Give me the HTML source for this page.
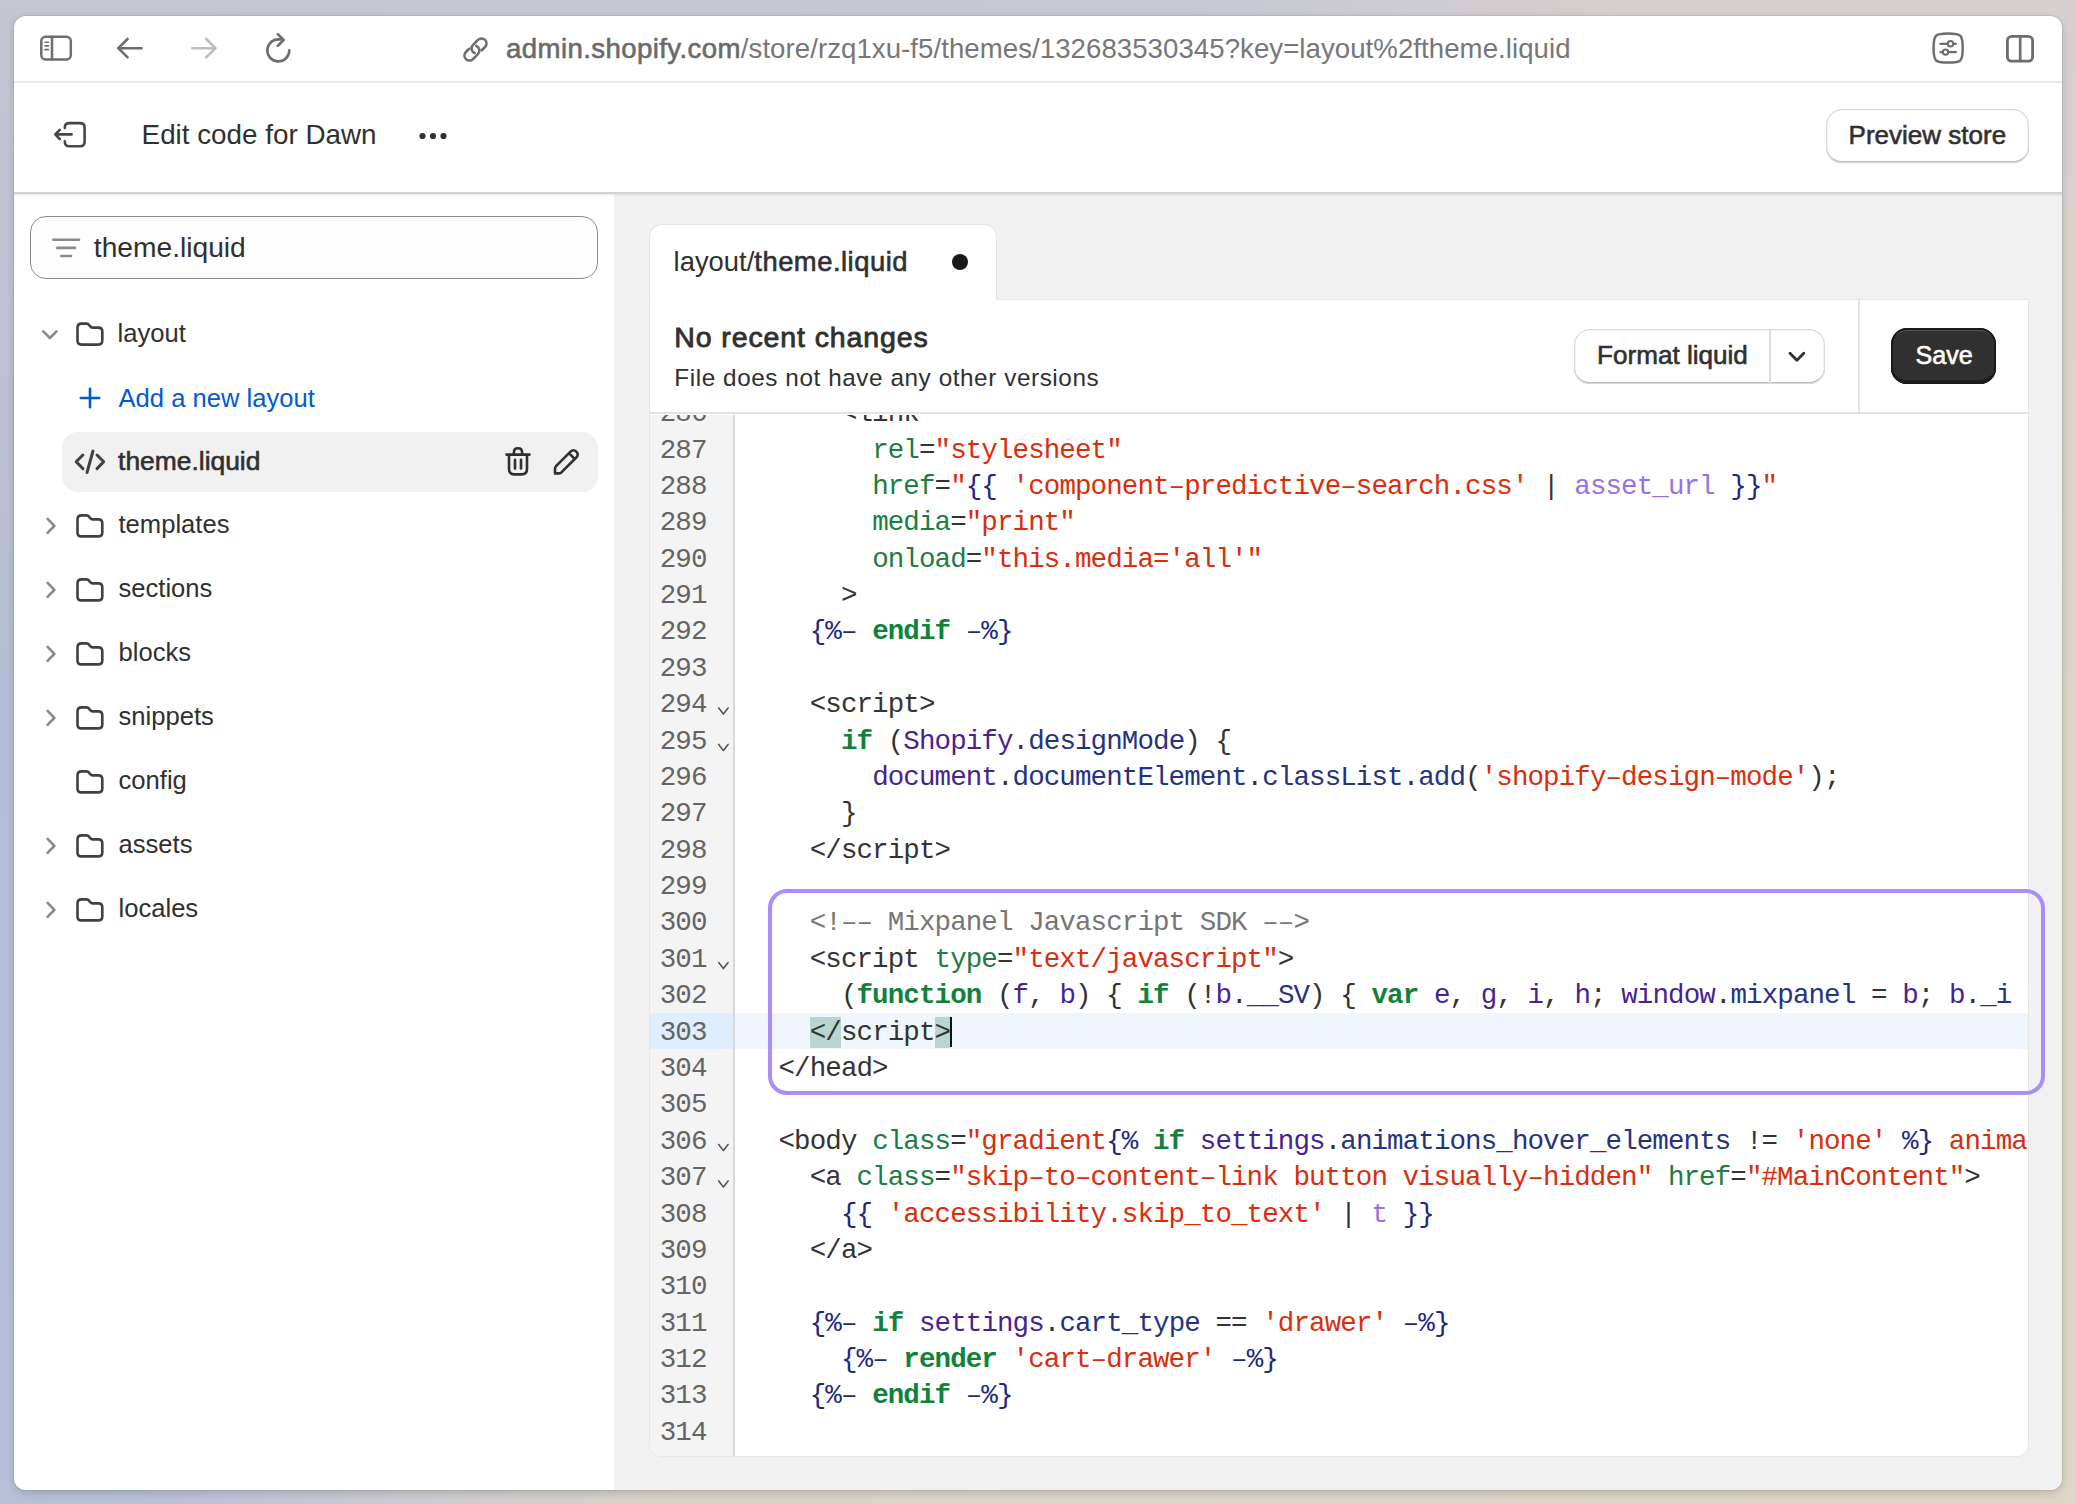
<!DOCTYPE html>
<html><head><meta charset="utf-8"><title>Edit code</title>
<style>
*{box-sizing:border-box;margin:0;padding:0}
html,body{width:2076px;height:1504px;overflow:hidden}
body{position:relative;font-family:"Liberation Sans",sans-serif;color:#303030;
 background:linear-gradient(180deg,rgba(208,206,206,.55) 0%,rgba(208,206,206,0) 45%),linear-gradient(125deg,#b5bdd6 0%,#b9c0d8 38%,#cdcbd0 47%,#dad3c9 55%,#dfd6c7 100%)}
.abs{position:absolute}
.win{position:absolute;left:14px;top:16px;width:2048px;height:1474px;border-radius:12px;background:#fff;overflow:hidden;
 box-shadow:0 0 0 1px rgba(0,0,0,.06),0 3px 8px rgba(0,0,0,.16)}
.inner{position:absolute;left:-14px;top:-16px;width:2076px;height:1504px}
.t{position:absolute;white-space:nowrap;line-height:1}
svg{position:absolute;overflow:visible}
.ln{position:absolute;left:0;width:57px;text-align:right;height:36.38px;line-height:36.38px;padding-top:1.5px;font-family:"Liberation Mono",monospace;font-size:27.5px;letter-spacing:-0.9px;color:#646464}
.cl{position:absolute;left:129px;height:36.38px;line-height:36.38px;padding-top:1.5px;white-space:pre;font-family:"Liberation Mono",monospace;font-size:27.5px;letter-spacing:-0.9px;color:#333}
.pn{color:#333}.at{color:#1b7d3f}.st{color:#d92e0c}.lq{color:#1f287e}.kw{color:#118239;font-weight:700}
.vr{color:#4a1f92}.pr{color:#25337f}.fl{color:#9a72e0}.cm{color:#767676}
.mb{background:#b8d5cf}
</style></head><body>
<div class="win"><div class="inner">
<div class="abs" style="left:0;top:81px;width:2076px;height:1.6px;background:#e9e9e9"></div>
<svg width="2076" height="1504" style="left:0;top:0" fill="none" stroke-linecap="round" stroke-linejoin="round">
<!-- sidebar icon -->
<rect x="41.3" y="36.8" width="29.5" height="22.6" rx="4.2" stroke="#6d6d6d" stroke-width="2.5"/>
<line x1="52" y1="37" x2="52" y2="59" stroke="#6d6d6d" stroke-width="2.5"/>
<line x1="45" y1="42.2" x2="48.5" y2="42.2" stroke="#6d6d6d" stroke-width="1.6"/>
<line x1="45" y1="45.9" x2="48.5" y2="45.9" stroke="#6d6d6d" stroke-width="1.6"/>
<line x1="45" y1="49.6" x2="48.5" y2="49.6" stroke="#6d6d6d" stroke-width="1.6"/>
<!-- back -->
<path d="M141.5 48.2 H118.3 M127.6 39 L118.3 48.2 L127.6 57.4" stroke="#6d6d6d" stroke-width="2.6"/>
<!-- forward -->
<path d="M192.3 48.2 H215.5 M206.2 39 L215.5 48.2 L206.2 57.4" stroke="#bdbdbd" stroke-width="2.6"/>
<!-- reload -->
<path d="M289.3 50.4 A11 11 0 1 1 280.5 39.6" stroke="#6d6d6d" stroke-width="2.6"/>
<path d="M277.8 34.2 L283.6 40 L277.8 45.8" stroke="#6d6d6d" stroke-width="2.6"/>
<!-- link -->
<g transform="translate(475.5 49.5) rotate(-45)" stroke="#6d6d6d" stroke-width="2.6">
<path d="M4 5 L8.5 5 A5 5 0 0 0 8.5 -5 L1.5 -5 A5 5 0 0 0 -3.1 1.95"/>
<path d="M-4 -5 L-8.5 -5 A5 5 0 0 0 -8.5 5 L-1.5 5 A5 5 0 0 0 3.1 -1.95"/>
</g>
<!-- sliders -->
<path d="M1948.2 33.5 C1935 33.5 1933.6 34.9 1933.6 48.1 C1933.6 61.3 1935 62.6 1948.2 62.6 C1961.4 62.6 1962.7 61.3 1962.7 48.1 C1962.7 34.9 1961.4 33.5 1948.2 33.5 Z" stroke="#6d6d6d" stroke-width="2.5"/>
<line x1="1940.4" y1="43.8" x2="1947.8" y2="43.8" stroke="#6d6d6d" stroke-width="2.2"/>
<line x1="1953.2" y1="43.8" x2="1955.9" y2="43.8" stroke="#6d6d6d" stroke-width="2.2"/>
<circle cx="1950.5" cy="43.8" r="2.7" stroke="#6d6d6d" stroke-width="2"/>
<line x1="1940.4" y1="52.1" x2="1942.8" y2="52.1" stroke="#6d6d6d" stroke-width="2.2"/>
<line x1="1948.2" y1="52.1" x2="1955.9" y2="52.1" stroke="#6d6d6d" stroke-width="2.2"/>
<circle cx="1945.5" cy="52.1" r="2.7" stroke="#6d6d6d" stroke-width="2"/>
<!-- split -->
<rect x="2007.4" y="36.4" width="25.2" height="24.8" rx="4.2" stroke="#6d6d6d" stroke-width="2.8"/>
<line x1="2020.2" y1="36.5" x2="2020.2" y2="61" stroke="#6d6d6d" stroke-width="2.6"/>
<!-- exit -->
<path d="M64.8 128 V127.6 Q64.8 123.1 69.3 123.1 H80.1 Q84.6 123.1 84.6 127.6 V141.7 Q84.6 146.2 80.1 146.2 H69.3 Q64.8 146.2 64.8 141.7 V141.4" stroke="#474747" stroke-width="2.6"/>
<path d="M71.6 134.4 H55.5 M59.8 129.8 L55.2 134.4 L59.8 139" stroke="#474747" stroke-width="2.6"/>
<!-- dots -->
<circle cx="422.5" cy="136" r="3.1" fill="#303030" stroke="none"/>
<circle cx="433" cy="136" r="3.1" fill="#303030" stroke="none"/>
<circle cx="443.5" cy="136" r="3.1" fill="#303030" stroke="none"/>
</svg>
<div class="t" style="left:506.00px;top:34.53px;font-size:27.6px;color:#777777;font-weight:400;letter-spacing:0.06px;font-family:'Liberation Sans',sans-serif;"><span style="-webkit-text-stroke:0.6px #6a6a6a;color:#6a6a6a;letter-spacing:0.4px">admin.shopify.com</span>/store/rzq1xu-f5/themes/132683530345?key=layout%2ftheme.liquid</div>
<div class="t" style="left:141.60px;top:121.36px;font-size:27.8px;color:#303030;font-weight:400;letter-spacing:0px;font-family:'Liberation Sans',sans-serif;">Edit code for Dawn</div>
<div class="abs" style="left:1825.5px;top:108.5px;width:203px;height:54.5px;border-radius:16px;background:#fff;box-shadow:inset 0 0 0 1.3px #d9d9d9, inset 0 -2px 0 #b5b5b5, 0 1px 0 rgba(0,0,0,.06)"></div>
<div class="t" style="left:1848.60px;top:121.99px;font-size:26px;color:#303030;font-weight:400;letter-spacing:0px;font-family:'Liberation Sans',sans-serif;-webkit-text-stroke:0.6px #303030;">Preview store</div>
<div class="abs" style="left:0;top:193px;width:614px;height:1320px;background:#fff"></div>
<div class="abs" style="left:30.3px;top:216.2px;width:567.6px;height:63.3px;border-radius:16px;background:#fdfdfd;border:1.4px solid #8c8c8c"></div>
<svg width="2076" height="1504" style="left:0;top:0" fill="none" stroke-linecap="round">
<line x1="53.3" y1="239.7" x2="79" y2="239.7" stroke="#8a8a8a" stroke-width="2.6"/>
<line x1="57.3" y1="247.9" x2="75" y2="247.9" stroke="#8a8a8a" stroke-width="2.6"/>
<line x1="61.3" y1="256" x2="71" y2="256" stroke="#8a8a8a" stroke-width="2.6"/>
</svg>
<div class="t" style="left:93.80px;top:233.12px;font-size:28.2px;color:#303030;font-weight:400;letter-spacing:0px;font-family:'Liberation Sans',sans-serif;">theme.liquid</div>
<div class="abs" style="left:62px;top:432px;width:535.7px;height:60px;border-radius:16px;background:#f1f1f1"></div>
<svg width="2076" height="1504" style="left:0;top:0" fill="none" stroke-linecap="round" stroke-linejoin="round">
<path d="M43.3 331.4 L49.9 338 L56.5 331.4" stroke="#8a8a8a" stroke-width="2.6"/>
<path d="M77.5 327.59999999999997 Q77.5 323.59999999999997 81.5 323.59999999999997 H86.6 Q88.1 323.59999999999997 89 324.9 L90.2 326.29999999999995 Q91.1 327.59999999999997 92.6 327.59999999999997 H98.3 Q102.3 327.59999999999997 102.3 331.59999999999997 V340.59999999999997 Q102.3 344.59999999999997 98.3 344.59999999999997 H81.5 Q77.5 344.59999999999997 77.5 340.59999999999997 Z" stroke="#404040" stroke-width="2.6"/>
<path d="M90 388.8 V407.3 M80.8 398 H99.2" stroke="#005bd3" stroke-width="2.6"/>
<path d="M82.9 455 L76.2 461.8 L82.9 468.6 M97 455 L103.7 461.8 L97 468.6 M93 451 L87 472.5" stroke="#404040" stroke-width="3"/>
<path d="M506.5 454.6 H529.5 M513.9 453.7 V452.4 Q513.9 448.3 518 448.3 Q522.1 448.3 522.1 452.4 V453.7 M509 455 V469 Q509 474.4 514.4 474.4 H521.6 Q527 474.4 527 469 V455 M515 459.7 V468.5 M521 459.7 V468.5" stroke="#303030" stroke-width="2.6"/>
<path d="M555 473.4 V469 Q555 467.2 556.3 465.9 L570.5 451.7 Q573.4 448.8 576.3 451.7 Q579.2 454.6 576.3 457.5 L562.1 471.7 Q560.8 473.4 559 473.4 Z M569.2 453.4 L574.6 458.8" stroke="#303030" stroke-width="2.6"/>
<path d="M47.6 518.9 L54.4 525.9 L47.6 532.9" stroke="#8a8a8a" stroke-width="2.6"/>
<path d="M77.5 519.4 Q77.5 515.4 81.5 515.4 H86.6 Q88.1 515.4 89 516.6999999999999 L90.2 518.1 Q91.1 519.4 92.6 519.4 H98.3 Q102.3 519.4 102.3 523.4 V532.4 Q102.3 536.4 98.3 536.4 H81.5 Q77.5 536.4 77.5 532.4 Z" stroke="#404040" stroke-width="2.6"/>
<path d="M47.6 582.9 L54.4 589.9 L47.6 596.9" stroke="#8a8a8a" stroke-width="2.6"/>
<path d="M77.5 583.4 Q77.5 579.4 81.5 579.4 H86.6 Q88.1 579.4 89 580.6999999999999 L90.2 582.1 Q91.1 583.4 92.6 583.4 H98.3 Q102.3 583.4 102.3 587.4 V596.4 Q102.3 600.4 98.3 600.4 H81.5 Q77.5 600.4 77.5 596.4 Z" stroke="#404040" stroke-width="2.6"/>
<path d="M47.6 646.9 L54.4 653.9 L47.6 660.9" stroke="#8a8a8a" stroke-width="2.6"/>
<path d="M77.5 647.4 Q77.5 643.4 81.5 643.4 H86.6 Q88.1 643.4 89 644.6999999999999 L90.2 646.1 Q91.1 647.4 92.6 647.4 H98.3 Q102.3 647.4 102.3 651.4 V660.4 Q102.3 664.4 98.3 664.4 H81.5 Q77.5 664.4 77.5 660.4 Z" stroke="#404040" stroke-width="2.6"/>
<path d="M47.6 710.9 L54.4 717.9 L47.6 724.9" stroke="#8a8a8a" stroke-width="2.6"/>
<path d="M77.5 711.4 Q77.5 707.4 81.5 707.4 H86.6 Q88.1 707.4 89 708.6999999999999 L90.2 710.1 Q91.1 711.4 92.6 711.4 H98.3 Q102.3 711.4 102.3 715.4 V724.4 Q102.3 728.4 98.3 728.4 H81.5 Q77.5 728.4 77.5 724.4 Z" stroke="#404040" stroke-width="2.6"/>
<path d="M77.5 775.4 Q77.5 771.4 81.5 771.4 H86.6 Q88.1 771.4 89 772.6999999999999 L90.2 774.1 Q91.1 775.4 92.6 775.4 H98.3 Q102.3 775.4 102.3 779.4 V788.4 Q102.3 792.4 98.3 792.4 H81.5 Q77.5 792.4 77.5 788.4 Z" stroke="#404040" stroke-width="2.6"/>
<path d="M47.6 838.9 L54.4 845.9 L47.6 852.9" stroke="#8a8a8a" stroke-width="2.6"/>
<path d="M77.5 839.4 Q77.5 835.4 81.5 835.4 H86.6 Q88.1 835.4 89 836.6999999999999 L90.2 838.1 Q91.1 839.4 92.6 839.4 H98.3 Q102.3 839.4 102.3 843.4 V852.4 Q102.3 856.4 98.3 856.4 H81.5 Q77.5 856.4 77.5 852.4 Z" stroke="#404040" stroke-width="2.6"/>
<path d="M47.6 902.9 L54.4 909.9 L47.6 916.9" stroke="#8a8a8a" stroke-width="2.6"/>
<path d="M77.5 903.4 Q77.5 899.4 81.5 899.4 H86.6 Q88.1 899.4 89 900.6999999999999 L90.2 902.1 Q91.1 903.4 92.6 903.4 H98.3 Q102.3 903.4 102.3 907.4 V916.4 Q102.3 920.4 98.3 920.4 H81.5 Q77.5 920.4 77.5 916.4 Z" stroke="#404040" stroke-width="2.6"/>
</svg>
<div class="t" style="left:117.50px;top:320.52px;font-size:25.6px;color:#303030;font-weight:400;letter-spacing:0px;font-family:'Liberation Sans',sans-serif;">layout</div>
<div class="t" style="left:118.50px;top:385.62px;font-size:25.6px;color:#005bd3;font-weight:400;letter-spacing:0px;font-family:'Liberation Sans',sans-serif;">Add a new layout</div>
<div class="t" style="left:118.10px;top:447.75px;font-size:26.4px;color:#303030;font-weight:400;letter-spacing:0px;font-family:'Liberation Sans',sans-serif;-webkit-text-stroke:0.6px #303030;">theme.liquid</div>
<div class="t" style="left:118.50px;top:512.32px;font-size:25.6px;color:#303030;font-weight:400;letter-spacing:0px;font-family:'Liberation Sans',sans-serif;">templates</div>
<div class="t" style="left:118.50px;top:576.32px;font-size:25.6px;color:#303030;font-weight:400;letter-spacing:0px;font-family:'Liberation Sans',sans-serif;">sections</div>
<div class="t" style="left:118.50px;top:640.32px;font-size:25.6px;color:#303030;font-weight:400;letter-spacing:0px;font-family:'Liberation Sans',sans-serif;">blocks</div>
<div class="t" style="left:118.50px;top:704.32px;font-size:25.6px;color:#303030;font-weight:400;letter-spacing:0px;font-family:'Liberation Sans',sans-serif;">snippets</div>
<div class="t" style="left:118.50px;top:768.32px;font-size:25.6px;color:#303030;font-weight:400;letter-spacing:0px;font-family:'Liberation Sans',sans-serif;">config</div>
<div class="t" style="left:118.50px;top:832.32px;font-size:25.6px;color:#303030;font-weight:400;letter-spacing:0px;font-family:'Liberation Sans',sans-serif;">assets</div>
<div class="t" style="left:118.50px;top:896.32px;font-size:25.6px;color:#303030;font-weight:400;letter-spacing:0px;font-family:'Liberation Sans',sans-serif;">locales</div>
<div class="abs" style="left:614px;top:193.5px;width:1470px;height:1320px;background:#f1f1f1"></div>
<div class="abs" style="left:0;top:192px;width:2076px;height:1.5px;background:#d3d3d6"></div>
<div class="abs" style="left:0;top:193.5px;width:2076px;height:3.5px;background:linear-gradient(rgba(0,0,0,.07),rgba(0,0,0,0))"></div>
<div class="abs" style="left:649.5px;top:225.2px;width:346.5px;height:80px;border-radius:12px 12px 0 0;background:#fff;box-shadow:0 0 0 1px #e6e6e6"></div>
<div class="t" style="left:673.60px;top:247.90px;font-size:27.4px;color:#303030;font-weight:400;letter-spacing:0px;font-family:'Liberation Sans',sans-serif;">layout/<span style="-webkit-text-stroke:0.6px #303030;letter-spacing:0.5px">theme.liquid</span></div>
<div class="abs" style="left:952px;top:254.2px;width:16px;height:16px;border-radius:50%;background:#1a1a1a"></div>
<div class="abs" style="left:649.5px;top:299.6px;width:1378.5px;height:1156.4px;border-radius:0 0 12px 12px;background:#fff;box-shadow:0 0 0 1px #e6e6e6;overflow:hidden" id="card">
<div class="abs" style="left:0;top:112.6px;width:1378.5px;height:1.5px;background:#e3e3e3"></div>
<div class="abs" style="left:1208.5px;top:0;width:1.5px;height:113px;background:#e3e3e3"></div>
</div>
<div class="abs" style="left:650.5px;top:290px;width:345.5px;height:12px;background:#fff"></div>
<div class="t" style="left:674.20px;top:323.07px;font-size:28.5px;color:#303030;font-weight:400;letter-spacing:0.9px;font-family:'Liberation Sans',sans-serif;-webkit-text-stroke:0.85px #303030;">No recent changes</div>
<div class="t" style="left:674.30px;top:366.33px;font-size:24.3px;color:#303030;font-weight:400;letter-spacing:0.57px;font-family:'Liberation Sans',sans-serif;">File does not have any other versions</div>
<div class="abs" style="left:1573.5px;top:328.5px;width:251px;height:55.2px;border-radius:16px;background:#fff;box-shadow:inset 0 0 0 1.3px #d9d9d9, inset 0 -2px 0 #b5b5b5"></div>
<div class="abs" style="left:1769.2px;top:329.5px;width:1.4px;height:53px;background:#dcdcdc"></div>
<div class="t" style="left:1597.00px;top:342.10px;font-size:26.1px;color:#303030;font-weight:400;letter-spacing:0px;font-family:'Liberation Sans',sans-serif;-webkit-text-stroke:0.6px #303030;">Format liquid</div>
<svg width="2076" height="1504" style="left:0;top:0" fill="none" stroke-linecap="round" stroke-linejoin="round"><path d="M1790 353.3 L1796.9 360.2 L1803.8 353.3" stroke="#303030" stroke-width="2.8"/></svg>
<div class="abs" style="left:1891px;top:328px;width:104.7px;height:56px;border-radius:16px;background:#303030;box-shadow:inset 0 0 0 2px #1a1a1a, inset 0 3px 0 rgba(255,255,255,.18), inset 0 -4px 0 #1e1e1e"></div>
<div class="t" style="left:1915.60px;top:342.55px;font-size:25.1px;color:#ffffff;font-weight:400;letter-spacing:0px;font-family:'Liberation Sans',sans-serif;-webkit-text-stroke:0.6px #ffffff;">Save</div>
<div class="abs" id="code" style="left:649.5px;top:414.5px;width:1378.5px;height:1041.5px;overflow:hidden;border-radius:0 0 12px 12px;background:#fff">
<div class="abs" style="left:0;top:0;width:83.5px;height:1100px;background:#f4f4f4"></div>
<div class="abs" style="left:83.5px;top:0;width:2px;height:1100px;background:#d9d9dc"></div>
<div class="abs" style="left:0;top:598.60px;width:83.5px;height:36.38px;background:#dfedfc"></div>
<div class="abs" style="left:85.5px;top:598.60px;width:1300px;height:36.38px;background:#f0f6fd"></div>
<div class="ln" style="top:-19.86px">286</div>
<div class="cl" style="top:-19.86px"><span class="pn">    &lt;link</span></div>
<div class="ln" style="top:16.52px">287</div>
<div class="cl" style="top:16.52px"><span class="pn">      </span><span class="at">rel</span><span class="pn">=</span><span class="st">"stylesheet"</span></div>
<div class="ln" style="top:52.90px">288</div>
<div class="cl" style="top:52.90px"><span class="pn">      </span><span class="at">href</span><span class="pn">=</span><span class="st">"</span><span class="lq">{{</span><span class="pn"> </span><span class="st">'component–predictive–search.css'</span><span class="pn"> | </span><span class="fl">asset_url</span><span class="pn"> </span><span class="lq">}}</span><span class="st">"</span></div>
<div class="ln" style="top:89.28px">289</div>
<div class="cl" style="top:89.28px"><span class="pn">      </span><span class="at">media</span><span class="pn">=</span><span class="st">"print"</span></div>
<div class="ln" style="top:125.66px">290</div>
<div class="cl" style="top:125.66px"><span class="pn">      </span><span class="at">onload</span><span class="pn">=</span><span class="st">"this.media='all'"</span></div>
<div class="ln" style="top:162.04px">291</div>
<div class="cl" style="top:162.04px"><span class="pn">    &gt;</span></div>
<div class="ln" style="top:198.42px">292</div>
<div class="cl" style="top:198.42px"><span class="pn">  </span><span class="lq">{%–</span><span class="pn"> </span><span class="kw">endif</span><span class="pn"> </span><span class="lq">–%}</span></div>
<div class="ln" style="top:234.80px">293</div>
<div class="cl" style="top:234.80px"></div>
<div class="ln" style="top:271.18px">294</div>
<div class="cl" style="top:271.18px"><span class="pn">  &lt;script&gt;</span></div>
<div class="ln" style="top:307.56px">295</div>
<div class="cl" style="top:307.56px"><span class="pn">    </span><span class="kw">if</span><span class="pn"> (</span><span class="vr">Shopify</span><span class="pn">.</span><span class="pr">designMode</span><span class="pn">) {</span></div>
<div class="ln" style="top:343.94px">296</div>
<div class="cl" style="top:343.94px"><span class="pn">      </span><span class="vr">document</span><span class="pn">.</span><span class="pr">documentElement</span><span class="pn">.</span><span class="pr">classList</span><span class="pn">.</span><span class="pr">add</span><span class="pn">(</span><span class="st">'shopify–design–mode'</span><span class="pn">);</span></div>
<div class="ln" style="top:380.32px">297</div>
<div class="cl" style="top:380.32px"><span class="pn">    }</span></div>
<div class="ln" style="top:416.70px">298</div>
<div class="cl" style="top:416.70px"><span class="pn">  &lt;/script&gt;</span></div>
<div class="ln" style="top:453.08px">299</div>
<div class="cl" style="top:453.08px"></div>
<div class="ln" style="top:489.46px">300</div>
<div class="cl" style="top:489.46px"><span class="pn">  </span><span class="cm">&lt;!–– Mixpanel Javascript SDK ––&gt;</span></div>
<div class="ln" style="top:525.84px">301</div>
<div class="cl" style="top:525.84px"><span class="pn">  &lt;script </span><span class="at">type</span><span class="pn">=</span><span class="st">"text/javascript"</span><span class="pn">&gt;</span></div>
<div class="ln" style="top:562.22px">302</div>
<div class="cl" style="top:562.22px"><span class="pn">    (</span><span class="kw">function</span><span class="pn"> (</span><span class="vr">f</span><span class="pn">, </span><span class="vr">b</span><span class="pn">) { </span><span class="kw">if</span><span class="pn"> (!</span><span class="vr">b</span><span class="pn">.</span><span class="pr">__SV</span><span class="pn">) { </span><span class="kw">var</span><span class="pn"> </span><span class="vr">e</span><span class="pn">, </span><span class="vr">g</span><span class="pn">, </span><span class="vr">i</span><span class="pn">, </span><span class="vr">h</span><span class="pn">; </span><span class="vr">window</span><span class="pn">.</span><span class="pr">mixpanel</span><span class="pn"> = </span><span class="vr">b</span><span class="pn">; </span><span class="vr">b</span><span class="pn">.</span><span class="pr">_i</span><span class="pn"> = []; </span><span class="vr">b</span><span class="pn">.</span><span class="pr">init</span><span class="pn"> = </span></div>
<div class="ln" style="top:598.60px">303</div>
<div class="cl" style="top:598.60px"><span class="pn">  </span><span class="pn mb">&lt;/</span><span class="pn">script</span><span class="pn mb">&gt;</span></div>
<div class="ln" style="top:634.98px">304</div>
<div class="cl" style="top:634.98px"><span class="pn">&lt;/head&gt;</span></div>
<div class="ln" style="top:671.36px">305</div>
<div class="cl" style="top:671.36px"></div>
<div class="ln" style="top:707.74px">306</div>
<div class="cl" style="top:707.74px"><span class="pn">&lt;body </span><span class="at">class</span><span class="pn">=</span><span class="st">"gradient</span><span class="lq">{%</span><span class="pn"> </span><span class="kw">if</span><span class="pn"> </span><span class="vr">settings</span><span class="pn">.</span><span class="pr">animations_hover_elements</span><span class="pn"> != </span><span class="st">'none'</span><span class="pn"> </span><span class="lq">%}</span><span class="st"> animate––hover–</span></div>
<div class="ln" style="top:744.12px">307</div>
<div class="cl" style="top:744.12px"><span class="pn">  &lt;a </span><span class="at">class</span><span class="pn">=</span><span class="st">"skip–to–content–link button visually–hidden"</span><span class="pn"> </span><span class="at">href</span><span class="pn">=</span><span class="st">"#MainContent"</span><span class="pn">&gt;</span></div>
<div class="ln" style="top:780.50px">308</div>
<div class="cl" style="top:780.50px"><span class="pn">    </span><span class="lq">{{</span><span class="pn"> </span><span class="st">'accessibility.skip_to_text'</span><span class="pn"> | </span><span class="fl">t</span><span class="pn"> </span><span class="lq">}}</span></div>
<div class="ln" style="top:816.88px">309</div>
<div class="cl" style="top:816.88px"><span class="pn">  &lt;/a&gt;</span></div>
<div class="ln" style="top:853.26px">310</div>
<div class="cl" style="top:853.26px"></div>
<div class="ln" style="top:889.64px">311</div>
<div class="cl" style="top:889.64px"><span class="pn">  </span><span class="lq">{%–</span><span class="pn"> </span><span class="kw">if</span><span class="pn"> </span><span class="vr">settings</span><span class="pn">.</span><span class="pr">cart_type</span><span class="pn"> == </span><span class="st">'drawer'</span><span class="pn"> </span><span class="lq">–%}</span></div>
<div class="ln" style="top:926.02px">312</div>
<div class="cl" style="top:926.02px"><span class="pn">    </span><span class="lq">{%–</span><span class="pn"> </span><span class="kw">render</span><span class="pn"> </span><span class="st">'cart–drawer'</span><span class="pn"> </span><span class="lq">–%}</span></div>
<div class="ln" style="top:962.40px">313</div>
<div class="cl" style="top:962.40px"><span class="pn">  </span><span class="lq">{%–</span><span class="pn"> </span><span class="kw">endif</span><span class="pn"> </span><span class="lq">–%}</span></div>
<div class="ln" style="top:998.78px">314</div>
<div class="cl" style="top:998.78px"></div>
<div class="ln" style="top:1035.16px">315</div>
<div class="cl" style="top:1035.16px"><span class="pn">  </span><span class="lq">{%–</span><span class="pn"> </span><span class="kw">sections</span><span class="pn"> </span><span class="st">'header–group'</span><span class="pn"> </span><span class="lq">–%}</span></div>
<svg width="1378" height="1100" style="left:0;top:0" fill="none" stroke-linecap="round" stroke-linejoin="round">
<path d="M68.7 293.0 L73.4 299.0 L78.1 293.0" stroke="#555" stroke-width="1.6"/>
<path d="M68.7 329.4 L73.4 335.4 L78.1 329.4" stroke="#555" stroke-width="1.6"/>
<path d="M68.7 547.6 L73.4 553.6 L78.1 547.6" stroke="#555" stroke-width="1.6"/>
<path d="M68.7 729.5 L73.4 735.5 L78.1 729.5" stroke="#555" stroke-width="1.6"/>
<path d="M68.7 765.9 L73.4 771.9 L78.1 765.9" stroke="#555" stroke-width="1.6"/>
</svg>
<div class="abs" style="left:300.0px;top:602.10px;width:2.2px;height:30px;background:#111"></div>
</div>
<div class="abs" style="left:768px;top:889px;width:1276.5px;height:206px;border:4px solid #ab8dfa;border-radius:19px"></div>
</div></div>
</body></html>
